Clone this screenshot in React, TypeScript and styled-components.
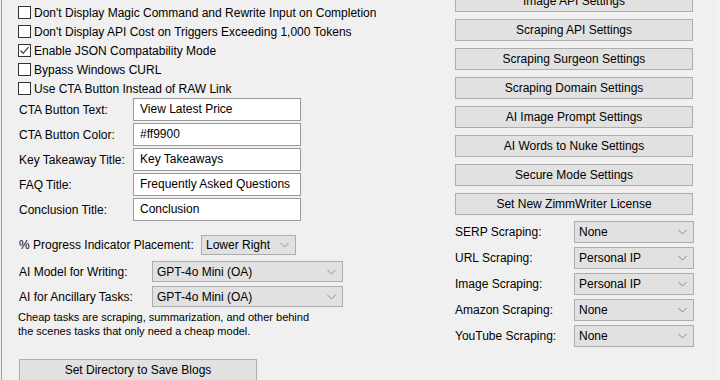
import React from 'react';
import styled, { createGlobalStyle } from 'styled-components';

const GlobalStyle = createGlobalStyle`
  body {
    margin: 0;
    background: #f0f0f0;
    font-family: 'Liberation Sans', Arial, sans-serif;
    font-size: 12px;
    color: #000;
  }
`;

const Window = styled.div`
  display: flex;
  align-items: flex-start;
  width: 718px;
  height: 380px;
  margin-left: 1px;
  overflow: hidden;
  border-left: 1px solid #a0a0a0;
  border-right: 1px solid #f8f8f8;
  box-sizing: border-box;
`;

const LeftCol = styled.div`
  width: 453px;
  flex-shrink: 0;
  padding: 3px 0 0 16px;
  box-sizing: border-box;
  display: flex;
  flex-direction: column;

  & > * {
    flex-shrink: 0;
  }
`;

const RightCol = styled.div`
  width: 238px;
  flex-shrink: 0;
  margin-top: -10px;
  display: flex;
  flex-direction: column;
  gap: 7px;

  & > * {
    flex-shrink: 0;
  }
`;

const CheckRow = styled.label`
  display: flex;
  align-items: center;
  gap: 3px;
  height: 19px;
  white-space: nowrap;
`;

const Box = styled.span`
  width: 13px;
  height: 13px;
  box-sizing: border-box;
  border: 1px solid #333;
  background: #fff;
  display: flex;
  align-items: center;
  justify-content: center;
`;

const FieldList = styled.div`
  display: flex;
  flex-direction: column;
  gap: 2px;
  padding-left: 1px;
`;

const FieldRow = styled.div`
  display: grid;
  grid-template-columns: 114px 168px;
  align-items: center;
  height: 23px;
`;

const TextBox = styled.div`
  height: 23px;
  box-sizing: border-box;
  border: 1px solid #9a9a9a;
  background: #fff;
  padding: 3px 6px 0;
  white-space: nowrap;
`;

const SelectRow = styled.div<{ $label: number; $gap?: number; $indent?: number }>`
  display: grid;
  grid-template-columns: ${(p) => p.$label}px auto;
  align-items: center;
  margin-top: ${(p) => p.$gap ?? 0}px;
  padding-left: ${(p) => p.$indent ?? 0}px;
`;

const Select = styled.div<{ $w: number; $h?: number }>`
  width: ${(p) => p.$w}px;
  height: ${(p) => p.$h ?? 21}px;
  box-sizing: border-box;
  border: 1px solid #adadad;
  background: #e1e1e1;
  display: flex;
  align-items: center;
  justify-content: space-between;
  padding: 0 6px 0 4px;
  white-space: nowrap;
`;

const Note = styled.p`
  margin: 3px 0 0;
  font-size: 11px;
  line-height: 14px;
`;

const Button = styled.div<{ $w?: number; $top?: number; $indent?: number }>`
  width: ${(p) => p.$w ?? 238}px;
  height: 22px;
  margin-top: ${(p) => p.$top ?? 0}px;
  margin-left: ${(p) => p.$indent ?? 0}px;
  box-sizing: border-box;
  border: 1px solid #adadad;
  background: #e1e1e1;
  display: flex;
  align-items: center;
  justify-content: center;
  white-space: nowrap;
`;

const ScrapeList = styled.div`
  display: flex;
  flex-direction: column;
  gap: 4px;
  margin-top: -1px;
`;

const Chevron = () => (
  <svg width="9" height="6" viewBox="0 0 9 6">
    <path d="M0.5 1 L4.5 5 L8.5 1" fill="none" stroke="#8a8a8a" strokeWidth="1" />
  </svg>
);

const Check = () => (
  <svg width="11" height="11" viewBox="0 0 11 11">
    <path d="M1.5 5.5 L4.2 8.3 L9.6 2.2" fill="none" stroke="#222" strokeWidth="1.1" />
  </svg>
);

const checks = [
  { text: "Don't Display Magic Command and Rewrite Input on Completion", on: false },
  { text: "Don't Display API Cost on Triggers Exceeding 1,000 Tokens", on: false },
  { text: 'Enable JSON Compatability Mode', on: true },
  { text: 'Bypass Windows CURL', on: false },
  { text: 'Use CTA Button Instead of RAW Link', on: false },
];

const fields = [
  ['CTA Button Text:', 'View Latest Price'],
  ['CTA Button Color:', '#ff9900'],
  ['Key Takeaway Title:', 'Key Takeaways'],
  ['FAQ Title:', 'Frequently Asked Questions'],
  ['Conclusion Title:', 'Conclusion'],
];

const buttons = [
  'Image API Settings',
  'Scraping API Settings',
  'Scraping Surgeon Settings',
  'Scraping Domain Settings',
  'AI Image Prompt Settings',
  'AI Words to Nuke Settings',
  'Secure Mode Settings',
  'Set New ZimmWriter License',
];

const scraping = [
  ['SERP Scraping:', 'None'],
  ['URL Scraping:', 'Personal IP'],
  ['Image Scraping:', 'Personal IP'],
  ['Amazon Scraping:', 'None'],
  ['YouTube Scraping:', 'None'],
];

function App() {
  return (
    <>
      <GlobalStyle />
      <Window>
        <LeftCol>
          {checks.map((c) => (
            <CheckRow key={c.text}>
              <Box>{c.on && <Check />}</Box>
              {c.text}
            </CheckRow>
          ))}
          <FieldList>
            {fields.map(([label, value]) => (
              <FieldRow key={label}>
                <span>{label}</span>
                <TextBox>{value}</TextBox>
              </FieldRow>
            ))}
          </FieldList>
          <SelectRow $label={182} $gap={14} $indent={1}>
            <span>% Progress Indicator Placement:</span>
            <Select $w={95} $h={20}>
              Lower Right <Chevron />
            </Select>
          </SelectRow>
          <SelectRow $label={133} $gap={6} $indent={1}>
            <span>AI Model for Writing:</span>
            <Select $w={191}>
              GPT-4o Mini (OA) <Chevron />
            </Select>
          </SelectRow>
          <SelectRow $label={133} $gap={4} $indent={1}>
            <span>AI for Ancillary Tasks:</span>
            <Select $w={191}>
              GPT-4o Mini (OA) <Chevron />
            </Select>
          </SelectRow>
          <Note>
            Cheap tasks are scraping, summarization, and other behind
            <br />
            the scenes tasks that only need a cheap model.
          </Note>
          <Button $top={21} $indent={1}>
            Set Directory to Save Blogs
          </Button>
        </LeftCol>
        <RightCol>
          {buttons.map((b) => (
            <Button key={b}>{b}</Button>
          ))}
          <ScrapeList>
            {scraping.map(([label, value]) => (
              <SelectRow key={label} $label={119}>
                <span>{label}</span>
                <Select $w={120} $h={22}>
                  {value} <Chevron />
                </Select>
              </SelectRow>
            ))}
          </ScrapeList>
        </RightCol>
      </Window>
    </>
  );
}

export default App;
